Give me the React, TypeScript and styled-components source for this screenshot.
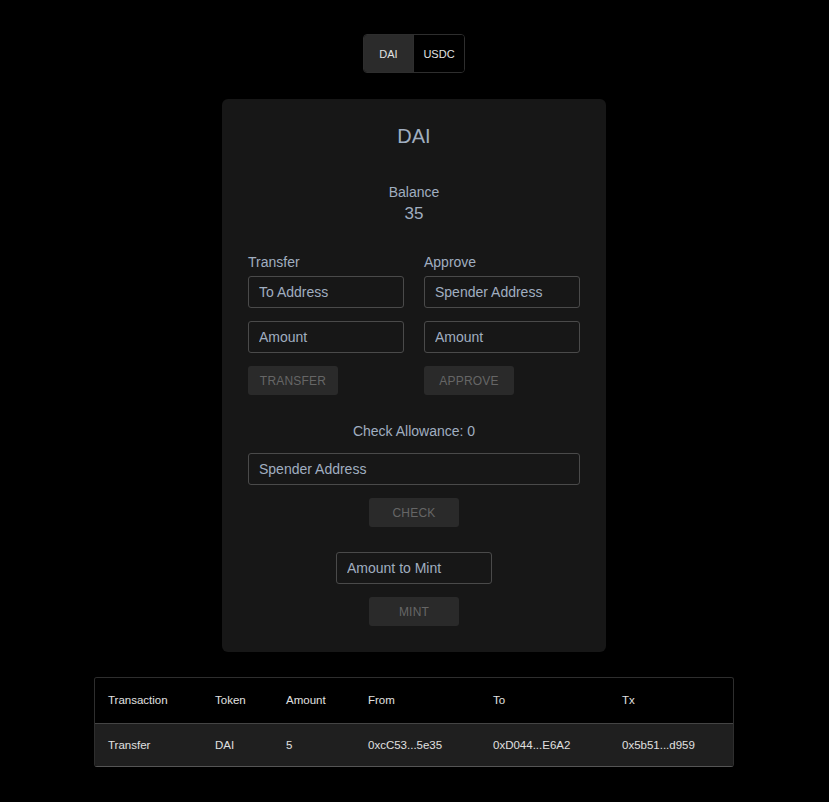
import React, { useState } from 'react';
import styled, { createGlobalStyle } from 'styled-components';

const GlobalStyle = createGlobalStyle`
  html, body {
    margin: 0;
    padding: 0;
    background: #000;
  }
  body {
    font-family: 'Liberation Sans', Arial, sans-serif;
    color: #a0aec0;
  }
  * {
    box-sizing: border-box;
  }
`;

const Page = styled.div`
  display: flex;
  flex-direction: column;
  align-items: center;
  padding: 34px 1px 34px 0;
  min-height: 802px;
`;

const Toggle = styled.div`
  display: flex;
  border: 1px solid #2e2e2e;
  border-radius: 4px;
  overflow: hidden;
`;

const ToggleButton = styled.button<{ active: boolean }>`
  width: 50px;
  height: 37px;
  padding: 0;
  border: none;
  border-right: 1px solid #2e2e2e;
  background: ${({ active }) => (active ? '#2b2b2b' : '#000')};
  color: #e2e2e2;
  font-family: 'Liberation Sans', Arial, sans-serif;
  font-size: 11px;
  cursor: pointer;

  &:last-child {
    border-right: none;
  }
`;

const Card = styled.div`
  display: flex;
  flex-direction: column;
  align-items: center;
  width: 384px;
  margin-top: 26px;
  padding: 22px 26px 26px;
  background: #171717;
  border-radius: 6px;
`;

const Title = styled.h2`
  margin: 0;
  font-size: 20px;
  font-weight: 400;
  line-height: 30px;
`;

const BalanceLabel = styled.div`
  margin-top: 31px;
  font-size: 14px;
  line-height: 20px;
`;

const BalanceValue = styled.div`
  font-size: 17px;
  line-height: 24px;
`;

const Columns = styled.div`
  display: grid;
  grid-template-columns: 1fr 1fr;
  gap: 20px;
  width: 100%;
  margin-top: 26px;
`;

const Column = styled.div`
  display: flex;
  flex-direction: column;
  align-items: flex-start;
`;

const Label = styled.div`
  font-size: 14px;
  line-height: 20px;
  margin-bottom: 4px;
`;

const Input = styled.input<{ width?: string }>`
  width: ${({ width }) => width || '100%'};
  height: 32px;
  padding: 0 10px;
  margin-bottom: 13px;
  background: transparent;
  border: 1px solid #4a4a4a;
  border-radius: 3px;
  color: #a0aec0;
  font-family: 'Liberation Sans', Arial, sans-serif;
  font-size: 14px;
  outline: none;

  &::placeholder {
    color: #a0aec0;
    opacity: 1;
  }
`;

const ActionButton = styled.button`
  width: 90px;
  height: 29px;
  padding: 0;
  border: none;
  border-radius: 3px;
  background: #2a2a2a;
  color: #666;
  font-family: 'Liberation Sans', Arial, sans-serif;
  font-size: 12px;
  letter-spacing: 0.2px;
  text-transform: uppercase;
  cursor: not-allowed;
`;

const AllowanceText = styled.div`
  margin-top: 26px;
  margin-bottom: 12px;
  font-size: 14px;
  line-height: 20px;
`;

const MintSection = styled.div`
  display: flex;
  flex-direction: column;
  align-items: center;
  margin-top: 25px;
`;

const TableWrap = styled.div`
  width: 640px;
  margin-top: 25px;
  border: 1px solid #2e2e2e;
  border-bottom-color: #555;
  border-radius: 3px;
  overflow: hidden;
`;

const Table = styled.table`
  width: 100%;
  border-collapse: collapse;
  table-layout: fixed;
  font-family: 'Liberation Sans Narrow', 'Liberation Sans', Arial, sans-serif;
  font-size: 11.5px;
  color: #e0e0e0;
`;

const HeadCell = styled.th<{ w?: number }>`
  width: ${({ w }) => (w ? `${w}px` : 'auto')};
  height: 45px;
  padding: 0 14px 0 13px;
  text-align: left;
  font-weight: 400;
  background: #000;
  border-bottom: 1px solid #444;
`;

const Cell = styled.td`
  height: 43px;
  padding: 0 14px 0 13px;
  background: #1f1f1f;
`;

const columns = [
  { label: 'Transaction', w: 107 },
  { label: 'Token', w: 71 },
  { label: 'Amount', w: 82 },
  { label: 'From', w: 125 },
  { label: 'To', w: 129 },
  { label: 'Tx' },
];

const rows = [
  ['Transfer', 'DAI', '5', '0xcC53...5e35', '0xD044...E6A2', '0x5b51...d959'],
];

const App: React.FC = () => {
  const [token, setToken] = useState('DAI');

  return (
    <Page>
      <GlobalStyle />
      <Toggle>
        {['DAI', 'USDC'].map((t) => (
          <ToggleButton key={t} active={token === t} onClick={() => setToken(t)}>
            {t}
          </ToggleButton>
        ))}
      </Toggle>

      <Card>
        <Title>{token}</Title>
        <BalanceLabel>Balance</BalanceLabel>
        <BalanceValue>35</BalanceValue>

        <Columns>
          <Column>
            <Label>Transfer</Label>
            <Input placeholder='To Address' />
            <Input placeholder='Amount' />
            <ActionButton>Transfer</ActionButton>
          </Column>
          <Column>
            <Label>Approve</Label>
            <Input placeholder='Spender Address' />
            <Input placeholder='Amount' />
            <ActionButton>Approve</ActionButton>
          </Column>
        </Columns>

        <AllowanceText>Check Allowance: 0</AllowanceText>
        <Input placeholder='Spender Address' />
        <ActionButton>Check</ActionButton>

        <MintSection>
          <Input width='156px' placeholder='Amount to Mint' />
          <ActionButton>Mint</ActionButton>
        </MintSection>
      </Card>

      <TableWrap>
        <Table>
          <thead>
            <tr>
              {columns.map((c) => (
                <HeadCell key={c.label} w={c.w}>
                  {c.label}
                </HeadCell>
              ))}
            </tr>
          </thead>
          <tbody>
            {rows.map((r, i) => (
              <tr key={i}>
                {r.map((v, j) => (
                  <Cell key={j}>{v}</Cell>
                ))}
              </tr>
            ))}
          </tbody>
        </Table>
      </TableWrap>
    </Page>
  );
};

export default App;
